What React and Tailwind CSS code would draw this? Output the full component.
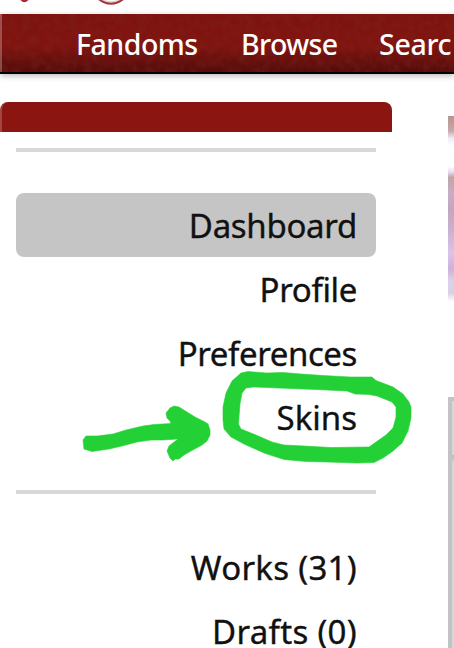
const primaryLinks = [
  { label: 'Dashboard', current: true, track: 'tracking-[-0.3px]' },
  { label: 'Profile', track: 'tracking-[-0.35px]' },
  { label: 'Preferences', track: 'tracking-[-0.4px]' },
  { label: 'Skins', track: 'tracking-[0px]' },
];

const workLinks = [
  { label: 'Works (31)', track: 'tracking-[0.3px]' },
  { label: 'Drafts (0)', track: 'tracking-[0.3px]' },
];

function LinkList({ items }) {
  return (
    <ul className="flex flex-col">
      {items.map((item) => (
        <li
          key={item.label}
          className={`flex h-16 items-center justify-end rounded-lg pr-[19px] pt-0.5 ${item.current ? 'bg-[#c5c5c5]' : ''}`}
        >
          <a className={`whitespace-nowrap [-webkit-text-stroke:0.35px_#111] ${item.track}`}>{item.label}</a>
        </li>
      ))}
    </ul>
  );
}

function LogoEdge() {
  return (
    <svg className="block h-3.5 w-full" viewBox="0 0 454 14" fill="none">
      <path d="M20.5 0 Q24 4.5 28.5 0 Z" fill="#a62a30" />
      <path d="M101 -1 Q111 3 121 -1 L119 3 Q111 4.5 104 2 Z" fill="#e3d3d2" />
      <path d="M98 -1.5 Q104 3.7 111 3.7 Q118 3.7 124 -1.5" stroke="#a4383e" strokeWidth="2" />
    </svg>
  );
}

function NavBar() {
  return (
    <nav className="relative h-[60px] w-full shrink-0 border-b-2 border-black bg-linear-to-b from-[#7e130e] via-[#80140f] via-55% to-[#540c09] shadow-[0_2px_6px_rgba(0,0,0,0.28)]">
      <svg className="absolute inset-0 h-full w-full" aria-hidden="true">
        <filter id="grain" x="0" y="0" width="100%" height="100%">
          <feTurbulence type="fractalNoise" baseFrequency="0.13" numOctaves="3" seed="4" />
          <feColorMatrix values="0 0 0 0 0.2  0 0 0 0 0.02  0 0 0 0 0.02  0.8 0 0 0 -0.3" />
        </filter>
        <rect width="100%" height="100%" filter="url(#grain)" />
      </svg>
      <ul className="relative flex h-full items-center overflow-hidden pl-[76px] pt-0.5 text-[28.5px] font-medium text-white">
        <li className="w-[165px] shrink-0 whitespace-nowrap tracking-[-0.5px]">Fandoms</li>
        <li className="w-[138px] shrink-0 whitespace-nowrap tracking-[-0.6px]">Browse</li>
        <li className="shrink-0 whitespace-nowrap tracking-[-0.3px]">Searc</li>
      </ul>
      <div className="absolute left-0 top-0 h-full w-0.5 bg-white/25" />
    </nav>
  );
}

function Markup() {
  return (
    <svg
      className="pointer-events-none absolute inset-0 h-full w-full"
      viewBox="0 0 454 648"
      fill="#23d136"
      stroke="#23d136"
      strokeLinejoin="round"
    >
      <path
        fillRule="evenodd"
        strokeWidth="0.6"
        d="M241 373 L248 371.5 L266 373 L283 372.5 L301 374 L323 375.5 L350 377 L372 377 L376 380.5 L393 387 L403 394 L409 402 L411 407 L411 418 L408 431 L402 443 L393 451 L383 458 L374 462.5 L357 463 L327 462 L306 461.5 L284 459.5 L264 453 L244 444 L231 437 L224 429 L223 420 L223 407 L226 393 L232 381 Z
           M246 388 L242 393 L240 404 L239 417 L238.5 424 L241 429 L256 435 L272 442 L284 445 L304 446 L331 447.5 L369 447 L376 442 L386 435 L393 428 L396 417 L396 407 L392 402 L377 396 L369 394.5 L355 394 L347 391 L316 389.5 L278 388 L254 387 Z"
      />
      <path
        strokeWidth="0.6"
        d="M83 440 L86 436 L91 436 L97 436 L113 434 L126 430 L143 426 L154 424.5 L171 423.5 L170 421 L167 418 L166 413 L170 408 L174 406 L179 407 L187 412 L195 417 L205 422 L208 424 L210 430 L210 435 L207 441 L202 445 L191 451 L184 455 L179 459 L175 459 L173 461 L170 458 L167 451 L169 446 L178 439 L163 440 L151 440 L137 442 L122 446 L109 449 L92 451.5 L84 449 Z"
      />
    </svg>
  );
}

export default function App() {
  return (
    <div className="relative flex h-[648px] w-[454px] flex-col overflow-hidden bg-white font-['Noto_Sans','Open_Sans',sans-serif] text-[#111]">
      <LogoEdge />
      <NavBar />
      <div className="flex min-h-0 flex-1 items-start justify-between">
        <aside className="mt-7 w-[392px]">
          <div className="h-[30px] rounded-t-lg border-l-2 border-[#a24540] bg-[#8b1511]" />
          <div className="px-4 text-[33px] leading-[44px]">
            <hr className="mt-4 h-1 border-0 bg-[#d8d8d8]" />
            <div className="mt-[41px]">
              <LinkList items={primaryLinks} />
            </div>
            <hr className="mt-[41px] h-1 border-0 bg-[#d8d8d8]" />
            <div className="mt-[41px]">
              <LinkList items={workLinks} />
            </div>
          </div>
        </aside>
        <main className="mt-[42px] flex w-1.5 flex-col overflow-hidden">
          <div className="h-[186px] bg-[linear-gradient(to_bottom,#b49591_0%,#c5aaaa_8%,#f0eafa_12%,#fff_16%,#fff_27%,#e9dff4_30%,#c2a4a8_33%,#c9adc8_42%,#c3a5bc_50%,#cbb0cf_61%,#d9c5e6_74%,#ccb1dc_82%,#ddd2ec_89%,#dacde7_95%,#fff_100%)]" />
          <div className="mt-[95px] h-[260px] border-l-4 border-t-4 border-[#c3c3c3] bg-[#d7d7d7]">
            <div className="mt-[54px] h-[202px] w-2 bg-linear-to-b from-[#b8b8b8] to-[#d7d7d7] to-4%" />
          </div>
        </main>
      </div>
      <Markup />
    </div>
  );
}
